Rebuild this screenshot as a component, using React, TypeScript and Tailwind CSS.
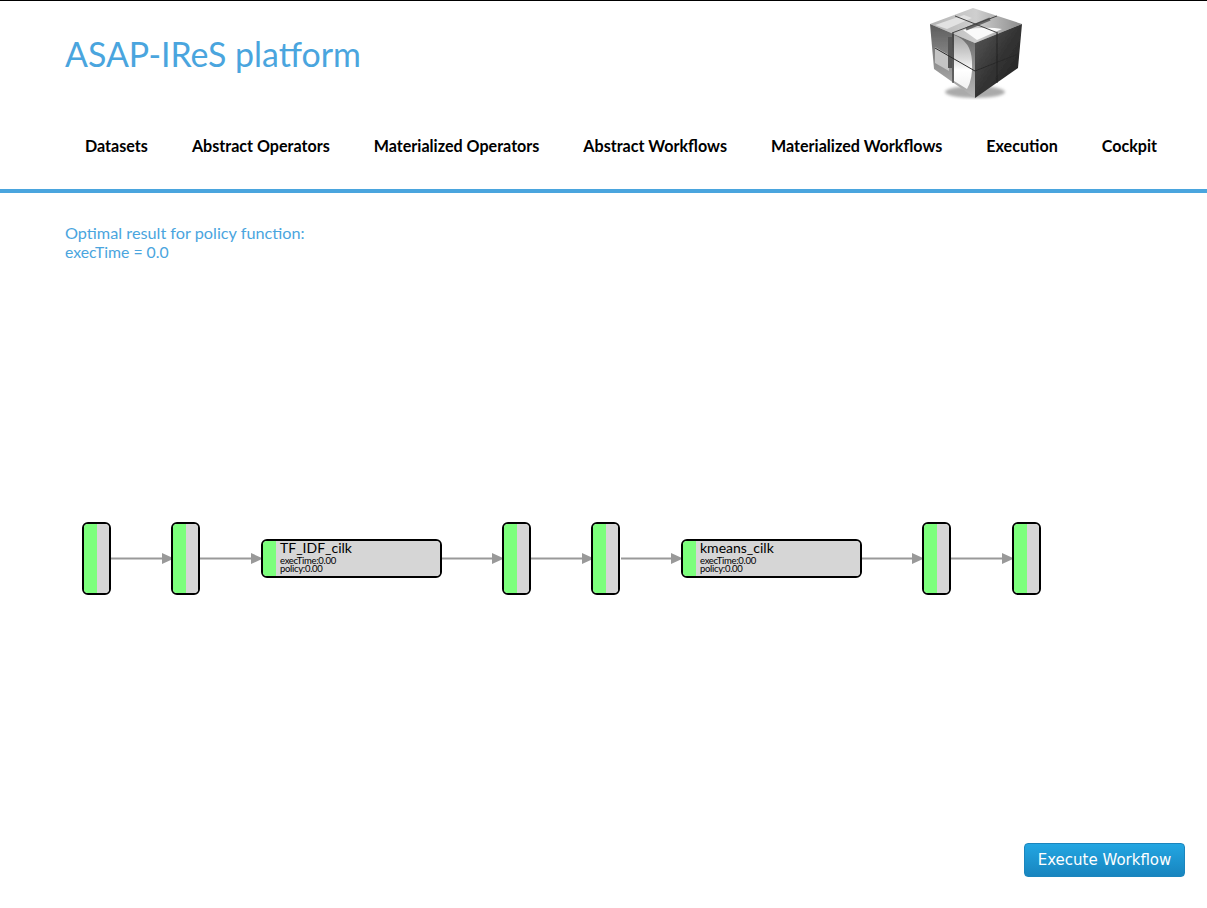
const navItems = [
  'Datasets',
  'Abstract Operators',
  'Materialized Operators',
  'Abstract Workflows',
  'Materialized Workflows',
  'Execution',
  'Cockpit',
]

// x offsets of the graph, relative to the canvas
const smallNodes = [82, 171, 502, 591, 922, 1012]
const bigNodes = [
  { x: 261, name: 'TF_IDF_cilk' },
  { x: 681, name: 'kmeans_cilk' },
]
const edges = [
  [110, 173],
  [200, 262],
  [441, 503],
  [531, 593],
  [621, 682],
  [861, 923],
  [951, 1013],
]

function CubeLogo() {
  return (
    <svg width="110" height="105" viewBox="0 0 110 105" className="block">
      <defs>
        <linearGradient id="left" x1="0" y1="0" x2="0" y2="1">
          <stop offset="0" stopColor="#5c5c5c" />
          <stop offset="0.5" stopColor="#8c8c8c" />
          <stop offset="1" stopColor="#b8b8b8" />
        </linearGradient>
        <linearGradient id="right" x1="0" y1="0" x2="1" y2="1">
          <stop offset="0" stopColor="#5a5a5a" />
          <stop offset="0.5" stopColor="#333" />
          <stop offset="1" stopColor="#1e1e1e" />
        </linearGradient>
        <linearGradient id="top" x1="0" y1="0" x2="1" y2="0">
          <stop offset="0" stopColor="#b4b4b4" />
          <stop offset="0.5" stopColor="#cfcfcf" />
          <stop offset="1" stopColor="#8c8c8c" />
        </linearGradient>
        <linearGradient id="patch" x1="0" y1="0" x2="0" y2="1">
          <stop offset="0" stopColor="#a4a4a4" />
          <stop offset="0.45" stopColor="#dcdcdc" />
          <stop offset="0.65" stopColor="#ffffff" />
          <stop offset="1" stopColor="#f2f2f2" />
        </linearGradient>
        <filter id="soft">
          <feGaussianBlur stdDeviation="1.5" />
        </filter>
        <filter id="fine">
          <feGaussianBlur stdDeviation="0.5" />
        </filter>
      </defs>
      <ellipse cx="55" cy="91" rx="30" ry="6" fill="#aaa" filter="url(#soft)" />
      <g filter="url(#fine)">
        <path d="M53 7 L102 23 L55 42 L10 23 Z" fill="url(#top)" />
        <path d="M10 23 L55 42 L55 97 L14 68 Z" fill="url(#left)" />
        <path d="M102 23 L55 42 L55 97 L98 67 Z" fill="url(#right)" />
        {/* light patches on the faces */}
        <path d="M43 29 Q66 25 82 28 L57 39 Z" fill="#fafafa" />
        <path d="M15 24 L44 14 L52 17 L27 28 Z" fill="#e2e2e2" />
        <path d="M34 34 Q51 40 52 60 Q53 78 47 88 L34 80 Z" fill="url(#patch)" />
        <path d="M15 46 L29 54 L29 70 L15 62 Z" fill="#c4c4c4" />
        {/* dark strokes of the mark */}
        <path d="M46 28 L70 18" stroke="#666" strokeWidth="3" />
        <path d="M30 36 L30 67" stroke="#555" strokeWidth="4" />
        {/* grid of the cube */}
        <path d="M35 15 L78 32 M77 15 L32 32" stroke="#444" strokeWidth="1" fill="none" />
        <path d="M15 47 L55 70 L98 53" stroke="#2a2a2a" strokeWidth="1" fill="none" />
        <path d="M33 32 L33 82 M77 32 L77 82" stroke="#222" strokeWidth="1" fill="none" />
      </g>
    </svg>
  )
}

function SmallNode({ x }: { x: number }) {
  return (
    <div
      className="absolute top-[522px] flex h-[73px] w-[29px] overflow-hidden rounded-[6px] border-2 border-black"
      style={{ left: x }}
    >
      <div className="w-[12.5px] bg-[#7cff7c]" />
      <div className="flex-1 bg-[#d6d6d6]" />
    </div>
  )
}

function BigNode({ x, name }: { x: number; name: string }) {
  return (
    <div
      className="absolute top-[539px] flex h-[39px] w-[180.5px] overflow-hidden rounded-[6px] border-2 border-black"
      style={{ left: x }}
    >
      <div className="w-[12.5px] bg-[#7cff7c]" />
      <div className="flex-1 bg-[#d6d6d6] pl-[4.5px] text-black">
        <div className="text-[14px] leading-[14px]">{name}</div>
        <div className="mt-[2px] text-[9.5px] leading-[8px] tracking-[-0.3px]">execTime:0.00</div>
        <div className="text-[9.5px] leading-[8px] tracking-[-0.3px]">policy:0.00</div>
      </div>
    </div>
  )
}

export default function App() {
  return (
    <div className="relative h-[908px] overflow-hidden border-t border-black bg-white font-['Lato',sans-serif]">
      <header className="border-b-4 border-[#4aa5de]">
        <div className="flex h-[112px] items-start justify-between pl-[65px] pr-[177px]">
          <h1 className="pt-[31px] text-[33.9px] leading-[44px] font-normal text-[#4aa5de]">ASAP-IReS platform</h1>
          <CubeLogo />
        </div>
        <nav className="flex h-[76px] items-start pl-[63px] pt-[23px]">
          {navItems.map((item) => (
            <a key={item} className="px-[22px] text-[16.1px] leading-[20px] font-bold text-black">
              {item}
            </a>
          ))}
        </nav>
      </header>

      <div className="pl-[65px] pt-[30px] text-[16.25px] leading-[19px] text-[#4aa5de]">
        <div>Optimal result for policy function:</div>
        <div className="text-[15.8px]">execTime = 0.0</div>
      </div>

      {/* workflow graph */}
      <div className="absolute inset-0 -top-px">
        <svg width="1207" height="908" className="absolute inset-0">
          {edges.map(([a, b]) => (
            <g key={a}>
              <line x1={a} y1="558.5" x2={b - 8} y2="558.5" stroke="#999" strokeWidth="2" />
              <path d={`M${b - 11} 553 L${b + 1} 558.5 L${b - 11} 564 Z`} fill="#999" />
            </g>
          ))}
        </svg>
        {smallNodes.map((x) => (
          <SmallNode key={x} x={x} />
        ))}
        {bigNodes.map((n) => (
          <BigNode key={n.x} x={n.x} name={n.name} />
        ))}
      </div>

      <button className="absolute left-[1024px] top-[842px] h-[34px] w-[161px] rounded-[4px] border border-[#1b85bd] bg-gradient-to-b from-[#23a6e2] to-[#1885bf] font-['DejaVu_Sans',sans-serif] text-[15px] text-white">
        Execute Workflow
      </button>
    </div>
  )
}
